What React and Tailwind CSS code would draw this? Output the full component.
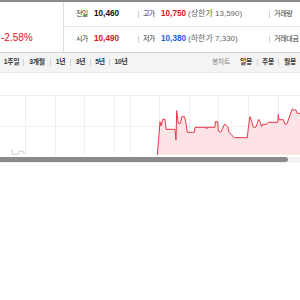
import React from 'react';

const line = [
  [157.3, 155], [159, 135], [160, 121.7], [161, 126], [162.7, 119.3], [165, 119.3],
  [166, 129.3], [175, 129.3], [176, 140], [176.7, 110.7], [178.3, 123.3], [180.5, 123.3],
  [181.7, 116.7], [184.5, 116.7], [185.7, 121.7], [187.3, 132.3], [194.3, 132.3],
  [195, 127.3], [206.3, 127.3], [206.7, 129], [207.2, 127.3], [215, 127.3], [215.3, 121.7],
  [217.7, 121.7], [218.3, 131], [220.7, 132.3], [222.7, 128.3], [224, 125], [225, 124.3],
  [227.7, 126.7], [229, 132.3], [231.7, 135], [234.3, 137.7], [247.3, 137.7], [248.3, 128.3],
  [250, 116.7], [251.7, 121.7], [253.3, 127.3], [255.7, 127.3], [257.3, 123.3], [258.7, 119.3],
  [260.3, 122.3], [261.7, 126.7], [262.7, 124.3], [266.7, 124.3], [268.3, 122.3], [277.7, 122.3],
  [278.3, 114.3], [279, 119.7], [283.3, 119.7], [285, 124.3], [287, 123.7], [290, 115],
  [292.3, 109], [294, 110], [296, 110], [297, 113.3], [300, 113.3],
];

// chart box starts at y=73
const TOP = 73;
const pts = line.map(([x, y]) => `${x},${(y - TOP).toFixed(1)}`).join(' ');
const fill = `${pts} 300,${155 - TOP} 157.3,${155 - TOP}`;
const vLines = [25.5, 55.5, 84.5, 114.5, 130.5, 159.5, 189.5, 218.5, 248.5, 278.5];

const leftTabs = [
  { t: '1주일', w: 'w-[23px]' },
  { t: '3개월', w: 'w-[26px]' },
  { t: '1년', w: 'w-[19px]' },
  { t: '3년', w: 'w-[19px]' },
  { t: '5년', w: 'w-[18px]' },
  { t: '10년', w: 'w-[22px]' },
];

function Sep() {
  return <span className="w-px h-[7px] bg-[#d0d0d0] shrink-0"></span>;
}

function Stat({ label, value, color, note }) {
  return (
    <div className="flex items-center">
      <span className="w-[18px] text-[7px] text-[#333] tracking-[-0.6px] whitespace-nowrap">{label}</span>
      <span className={`text-[8.2px] font-bold ${color}`}>{value}</span>
      {note && <span className="ml-[2px] text-[8px] text-[#666] whitespace-nowrap">{note}</span>}
    </div>
  );
}

export default function App() {
  return (
    <div className="w-[300px] h-[300px] bg-white overflow-hidden font-['Liberation_Sans','Noto_Sans_CJK_KR',sans-serif]">
      <div className="h-[2px] bg-[#8c8c8c]"></div>

      {/* price summary */}
      <div className="flex h-[50px]">
        <div className="w-[64px] shrink-0 border-r border-[#dcdcdc] flex flex-col justify-end pb-[9px] pl-[1px]">
          <span className="text-[10px] text-[#e3101e] leading-none">-2.58%</span>
        </div>
        <div className="flex-1 flex flex-col">
          <div className="h-[25px] border-b border-[#e6e6e6] flex items-center">
            <div className="w-[74px] pl-[12px] shrink-0"><Stat label="전일" value="10,460" color="text-[#111]" /></div>
            <Sep />
            <div className="w-[130px] pl-[4px] shrink-0"><Stat label="고가" value="10,750" color="text-[#e3101e]" note="(상한가 13,590)" /></div>
            <Sep />
            <div className="pl-[4px] text-[7px] tracking-[-0.3px] text-[#333] whitespace-nowrap">거래량</div>
          </div>
          <div className="h-[25px] flex items-center">
            <div className="w-[74px] pl-[12px] shrink-0"><Stat label="시가" value="10,490" color="text-[#e3101e]" /></div>
            <Sep />
            <div className="w-[130px] pl-[4px] shrink-0"><Stat label="저가" value="10,380" color="text-[#1a5fd0]" note="(하한가 7,330)" /></div>
            <Sep />
            <div className="pl-[4px] text-[7px] tracking-[-0.3px] text-[#333] whitespace-nowrap">거래대금</div>
          </div>
        </div>
      </div>

      {/* period tabs */}
      <div className="h-[21px] border-t border-b border-[#d6d6d6] border-b-[#e8e8e8] bg-[#f4f4f4] flex items-center overflow-hidden">
        {leftTabs.map((tab, i) => (
          <React.Fragment key={tab.t}>
            {i > 0 && <Sep />}
            <span className={`${tab.w} shrink-0 text-center text-[6.8px] tracking-[-0.3px] font-bold text-[#333]`}>{tab.t}</span>
          </React.Fragment>
        ))}
        <span className="w-[75px] shrink-0"></span>
        <span className="w-[28px] shrink-0 text-center text-[6.8px] tracking-[-0.3px] text-[#888]">봉차트</span>
        <span className="w-[22px] shrink-0 text-center text-[6.8px] tracking-[-0.3px] font-bold text-[#333]">일봉</span>
        <Sep />
        <span className="w-[20px] shrink-0 text-center text-[6.8px] tracking-[-0.3px] font-bold text-[#333]">주봉</span>
        <Sep />
        <span className="w-[22px] shrink-0 text-center text-[6.8px] tracking-[-0.3px] font-bold text-[#333]">월봉</span>
      </div>

      {/* chart */}
      <div className="h-[84px]">
        <svg width="300" height="84" viewBox="0 0 300 84">
          {vLines.map((x) => (
            <line key={x} x1={x} y1={95 - TOP} x2={x} y2={155 - TOP} stroke="#efefef" strokeWidth="1" />
          ))}
          <line x1="0" y1={95.5 - TOP} x2="300" y2={95.5 - TOP} stroke="#efefef" />
          <line x1="0" y1={126.5 - TOP} x2="300" y2={126.5 - TOP} stroke="#efefef" />
          <polygon points={fill} fill="#fde3e5" />
          <polyline points={pts} fill="none" stroke="#e6384b" strokeWidth="1" strokeLinejoin="round" />
          <polyline
            points={`11.7,${149.3 - TOP} 12.3,${154.3 - TOP} 18.3,${154.3 - TOP} 19,${151 - TOP} 23.3,${151 - TOP} 24.3,${154.3 - TOP}`}
            fill="none" stroke="#c4c4c4" strokeWidth="0.8"
          />
        </svg>
      </div>

      {/* scrollbar */}
      <div className="h-[6px] bg-[#f4f4f4] flex">
        <div className="w-[288px] h-[5px] bg-[#8a8a8a] rounded-r-full"></div>
      </div>
    </div>
  );
}
